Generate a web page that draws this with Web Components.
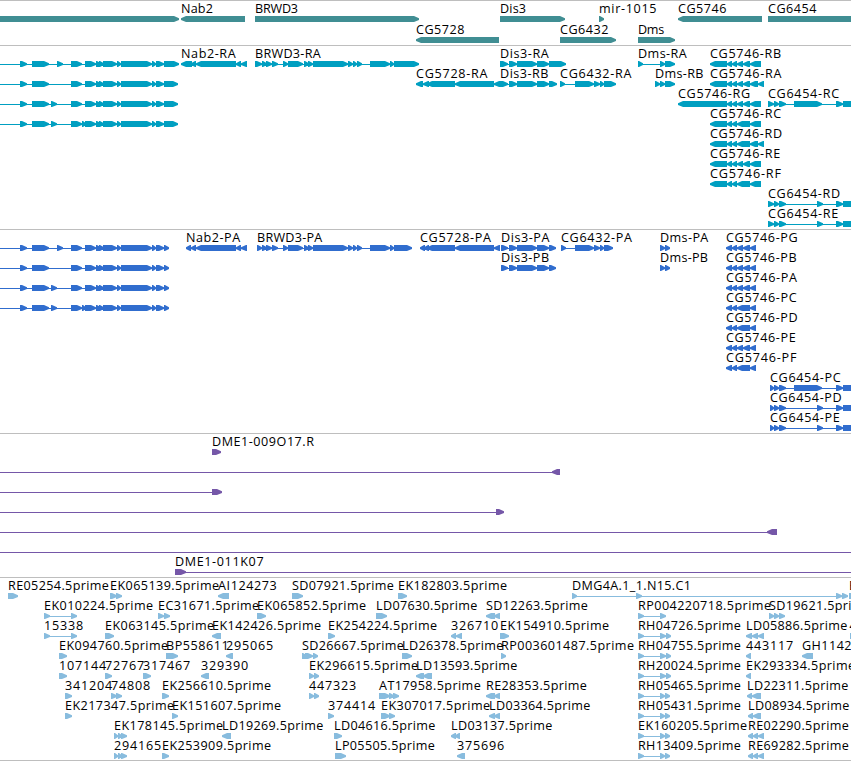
<!DOCTYPE html>
<html lang="en">
<head>
<meta charset="utf-8">
<title>Genome browser</title>
<style>
  body {
    margin: 0;
    background: #fff;
    color: #000;
    font: 12.6px/16px "Open Sans", "Noto Sans", sans-serif;
    overflow: hidden;
  }
</style>
</head>
<body>
<genome-view></genome-view>

<script>
// Label advance widths in px, digits and anything not listed are 8
const ADVANCE = {
  A: 8.4, D: 9, E: 7.2, G: 9, H: 9, I: 3, L: 6.5, M: 10, N: 9, O: 9.5, P: 7.3, R: 7.8, S: 7, T: 7.5, W: 10,
  a: 7, e: 7.1, i: 3.2, m: 11, r: 5, s: 6, ".": 4, "-": 7, "_": 6
};

const TIP = 6;

class GenomeFeature extends HTMLElement {
  constructor() {
    super();
    this.shadowDOM = this.attachShadow({ mode: "open" });
  }

  connectedCallback() {
    this.render();
  }

  get spans() {
    return this.getAttribute("spans").split(" ").map((s) => s.split(":").map(Number));
  }

  shape([start, end], origin, reverse) {
    const a = start - origin;
    const b = end - origin;
    const tip = Math.min(TIP, b - a) - 1;
    return reverse
      ? `M${b} 0H${a + tip}L${a} 2.3V3.9L${a + tip} 6H${b}Z`
      : `M${a} 0H${b - tip}L${b} 2.3V3.9L${b - tip} 6H${a}Z`;
  }

  render() {
    const spans = this.spans;
    const reverse = this.hasAttribute("reverse");
    const from = Number(this.getAttribute("from") ?? spans[0][0]);
    const to = Number(this.getAttribute("to") ?? spans[spans.length - 1][1]);
    const width = to - from;
    // a span of zero length only carries the connecting line
    const d = spans.filter(([a, b]) => b > a).map((s) => this.shape(s, from, reverse)).join("");

    this.shadowDOM.innerHTML = `
      <style>
      :host {
        display: flex;
        flex-direction: column;
        align-items: flex-start;
        grid-area: 1 / 1;
        justify-self: start;
        width: 0;
        margin-left: ${from}px;
      }
      .label {
        height: 15px;
        line-height: 15px;
        white-space: nowrap;
        font-kerning: none;
        font-variant-ligatures: none;
      }
      svg {
        display: block;
        flex: none;
        fill: var(--feature-color);
      }
      </style>
      <span class="label"><slot></slot></span>
      <svg width="${width}" height="6" viewBox="0 0 ${width} 6">
        <rect x="0" y="3" width="${width}" height="1" shape-rendering="crispEdges"/>
        <path d="${d}"/>
      </svg>
    `;
    this.fitLabel();
  }

  fitLabel() {
    const text = this.textContent;
    if (!text) return;
    const label = this.shadowDOM.querySelector(".label");
    const wanted = [...text].reduce((sum, c) => sum + (ADVANCE[c] ?? 8), 0);
    const natural = label.getBoundingClientRect().width;
    label.style.letterSpacing = `${(wanted - natural) / text.length}px`;
  }
}

class TrackRow extends HTMLElement {
  constructor() {
    super();
    this.attachShadow({ mode: "open" }).innerHTML = `
      <style>
      :host {
        display: grid;
        grid-template-columns: 100%;
        height: var(--row-height, 20px);
      }
      </style>
      <slot></slot>
    `;
  }
}

class GenomeTrack extends HTMLElement {
  constructor() {
    super();
    this.attachShadow({ mode: "open" }).innerHTML = `
      <style>
      :host {
        display: flex;
        flex-direction: column;
        border-top: 1px solid #bebebe;
        padding-bottom: 3px;
      }
      </style>
      <slot></slot>
    `;
  }
}

// Exon blocks shared between transcripts
const TAIL = "96:101 99:104 103:117 117:121 121:152 152:156 156:164";
const LEFT = [
  `20:27 32:49 57:63 71:82 85:96 ${TAIL}`,
  `20:27 32:49 71:82 85:96 ${TAIL}`,
  `20:27 32:49 51:57 71:82 85:96 ${TAIL}`,
  `20:27 32:49 51:57 71:82 82:86 85:96 ${TAIL}`
];
const NAB = "191:196 196:236 236:241 241:247";
const BRWD = "262:267 266:272 272:278 283:288 288:303 304:309 308:313 313:348 348:353 353:357 357:362 370:390 390:394";
const DIS = "509:517 517:537 537:549";
const SPLIT = "727:732 732:737 737:743 743:750";
const MERGED = "727:732 732:737 737:750";
const LONG = "774:779 779:786 794:822 836:843 843:880";
const SHORT = "774:779 779:786 817:823 836:843 843:880";
const RH = "638:644 660:666 666:671";
const RH2 = "638:644 660:665 665:670";

// [label, spans, strand, line start, line end]
const TRACKS = [
  { color: "#408e93", rowHeight: 21, pad: 2, rows: [
    [["", "-10:179"], ["Nab2", "181:245", "-"], ["BRWD3", "255:419"], ["Dis3", "500:565"],
      ["mir-1015", "599:604"], ["CG5746", "678:762", "-"], ["CG6454", "768:880"]],
    [["CG5728", "416:499", "-"], ["CG6432", "560:616"], ["Dms", "638:675"]]
  ] },
  { color: "#009fc1", rows: [
    [["", LEFT[0] + " 164:179", "+", 0], ["Nab2-RA", "181:192 " + NAB, "-"], ["BRWD3-RA", `255:262 ${BRWD} 394:419`],
      ["Dis3-RA", `500:508 ${DIS} 549:566`], ["Dms-RA", "638:643 660:665 665:675"], ["CG5746-RB", `710:727 ${SPLIT} 750:761`, "-"]],
    [["", LEFT[1] + " 164:178", "+", 0], ["CG5728-RA", "416:423 423:429 427:455 455:494 494:500", "-"],
      ["Dis3-RB", `500:508 ${DIS} 549:557`], ["CG6432-RA", "560:565 575:594 594:600 600:604 604:616"],
      ["Dms-RB", "655:660 660:665 665:675"], ["CG5746-RA", `710:727 ${SPLIT} 750:758 758:764`, "-"]],
    [["", LEFT[2] + " 164:178", "+", 0], ["CG5746-RG", `678:727 ${SPLIT} 750:761`, "-"], ["CG6454-RC", "768:774 " + LONG]],
    [["", LEFT[3] + " 164:178", "+", 0], ["CG5746-RC", `710:727 ${MERGED} 750:761`, "-"]],
    [["CG5746-RD", `710:727 ${MERGED} 750:758 758:764`, "-"]],
    [["CG5746-RE", `710:727 ${SPLIT} 750:761`, "-"]],
    [["CG5746-RF", `710:727 ${MERGED} 750:761`, "-"]],
    [["CG6454-RD", "768:774 " + SHORT]],
    [["CG6454-RE", "768:774 " + SHORT]]
  ] },
  { color: "#306dce", rows: [
    [["", LEFT[0] + " 164:169", "+", 0], ["Nab2-PA", "186:191 " + NAB, "-"], ["BRWD3-PA", `257:262 ${BRWD} 394:412`],
      ["CG5728-PA", "420:425 424:429 427:455 455:494 494:500", "-"], ["Dis3-PA", `501:508 ${DIS} 549:556`],
      ["CG6432-PA", "561:566 575:594 594:600 600:604 604:613"], ["Dms-PA", "660:665 665:670"],
      ["CG5746-PG", "726:732 732:737 737:743 743:750 750:756", "-"]],
    [["", LEFT[1] + " 164:169", "+", 0], ["Dis3-PB", `501:508 ${DIS} 549:556`], ["Dms-PB", "660:665 665:670"],
      ["CG5746-PB", "726:732 732:737 737:743 743:750 750:756", "-"]],
    [["", LEFT[2] + " 164:169", "+", 0], ["CG5746-PA", "726:732 732:737 737:743 743:750 750:756", "-"]],
    [["", LEFT[3] + " 164:169", "+", 0], ["CG5746-PC", "726:732 732:737 737:750 750:756", "-"]],
    [["CG5746-PD", "726:732 732:737 737:750 750:756", "-"]],
    [["CG5746-PE", "726:732 732:737 737:743 743:750 750:756", "-"]],
    [["CG5746-PF", "726:732 732:737 737:750 750:756", "-"]],
    [["CG6454-PC", "770:774 " + LONG]],
    [["CG6454-PD", "770:774 " + SHORT]],
    [["CG6454-PE", "770:774 " + SHORT]]
  ] },
  { color: "#7557a8", rows: [
    [["DME1-009O17.R", "212:221"]],
    [["", "552:560", "-", 0]],
    [["", "212:222", "+", 0]],
    [["", "496:504", "+", 0]],
    [["", "767:777", "-", 0]],
    [["", "0:0", "+", 0, 880]],
    [["DME1-011K07", "175:186", "+", 175, 880]]
  ] },
  { color: "#88bcde", pad: 2, rows: [
    [["RE05254.5prime", "8:18"], ["EK065139.5prime", "110:117 116:122"], ["AI124273", "218:229", "-"],
      ["SD07921.5prime", "292:303"], ["EK182803.5prime", "398:407"],
      ["DMG4A.1_1.N15.C1", "572:577 636:642 836:842 842:848"], ["E", "849:859"]],
    [["EK010224.5prime", "44:50 71:77"], ["EC31671.5prime", "158:164 164:170"], ["EK065852.5prime", "257:266"],
      ["LD07630.5prime", "376:387"], ["SD12263.5prime", "486:495 494:500", "-"],
      ["RP004220718.5prime", "638:644 660:666"], ["SD19621.5prime", "769:774 774:779 779:785"]],
    [["15338", "44:50 71:77"], ["EK063145.5prime", "105:114"], ["EK142426.5prime", "212:221", "-"],
      ["EK254224.5prime", "328:335"], ["326710", "451:456 456:462", "-"], ["EK154910.5prime", "500:509"],
      ["RH04726.5prime", RH], ["LD05886.5prime", "746:752 752:758 758:764", "-"], ["4", "849.5:860"]],
    [["EK094760.5prime", "59:67"], ["BP558611", "166:178"], ["295065", "226:233", "-"],
      ["SD26667.5prime", "302:307 305:313 313:318"], ["LD26378.5prime", "402:412"],
      ["RP003601487.5prime", "501:506"], ["RH04755.5prime", RH], ["443117", "746:751", "-"], ["GH1142", "802:813", "-"]],
    [["107144", "59:67"], ["72767", "105:112"], ["317467", "143:151"], ["329390", "201:209", "-"],
      ["EK296615.5prime", "309:314 314:319"], ["LD13593.5prime", "416:424 423:432", "-"],
      ["RH20024.5prime", RH], ["EK293334.5prime", "746:751", "-"]],
    [["341204", "65:72"], ["74808", "111:117 116:122"], ["EK256610.5prime", "162:169"], ["447323", "309:314 314:319"],
      ["AT17958.5prime", "379:390 389:394 393:399"], ["RE28353.5prime", "486:495 494:500", "-"],
      ["RH05465.5prime", RH2], ["LD22311.5prime", "747:752 752:761", "-"]],
    [["EK217347.5prime", "65:72"], ["EK151607.5prime", "172:178"], ["374414", "328:334"],
      ["EK307017.5prime", "381:390 389:395"], ["LD03364.5prime", "489:495 494:500", "-"],
      ["RH05431.5prime", RH2], ["LD08934.5prime", "748:753 753:761", "-"]],
    [["EK178145.5prime", "114:118 118:122 121:127"], ["LD19269.5prime", "222:231", "-"], ["LD04616.5prime", "334:342"],
      ["LD03137.5prime", "451:456 455:460", "-"], ["EK160205.5prime", RH2],
      ["RE02290.5prime", "748:753 753:758 758:764", "-"]],
    [["294165", "114:118 118:122 121:127"], ["EK253909.5prime", "162:169"], ["LP05505.5prime", "335:346"],
      ["375696", "457:465", "-"], ["RH13409.5prime", RH2], ["RE69282.5prime", "748:753 753:758 758:764", "-"]]
  ] }
];

class GenomeView extends HTMLElement {
  constructor() {
    super();
    this.shadowDOM = this.attachShadow({ mode: "open" });
  }

  connectedCallback() {
    this.render();
  }

  feature([label, spans, strand, from, to]) {
    const attrs = [`spans="${spans}"`];
    if (strand === "-") attrs.push("reverse");
    if (from !== undefined) attrs.push(`from="${from}"`);
    if (to !== undefined) attrs.push(`to="${to}"`);
    return `<genome-feature ${attrs.join(" ")}>${label}</genome-feature>`;
  }

  track({ color, rowHeight = 20, pad = 3, rows }) {
    return `
      <genome-track style="--feature-color: ${color}; --row-height: ${rowHeight}px; padding-bottom: ${pad}px">
        ${rows.map((row) => `<track-row>${row.map((f) => this.feature(f)).join("")}</track-row>`).join("")}
      </genome-track>`;
  }

  render() {
    this.shadowDOM.innerHTML = `
      <style>
      :host {
        display: flex;
        flex-direction: column;
        width: 851px;
        height: 760px;
        overflow: hidden;
        border-bottom: 1px solid #bebebe;
      }
      </style>
      ${TRACKS.map((t) => this.track(t)).join("")}
    `;
  }
}

customElements.define("genome-feature", GenomeFeature);
customElements.define("track-row", TrackRow);
customElements.define("genome-track", GenomeTrack);
customElements.define("genome-view", GenomeView);
</script>
</body>
</html>
